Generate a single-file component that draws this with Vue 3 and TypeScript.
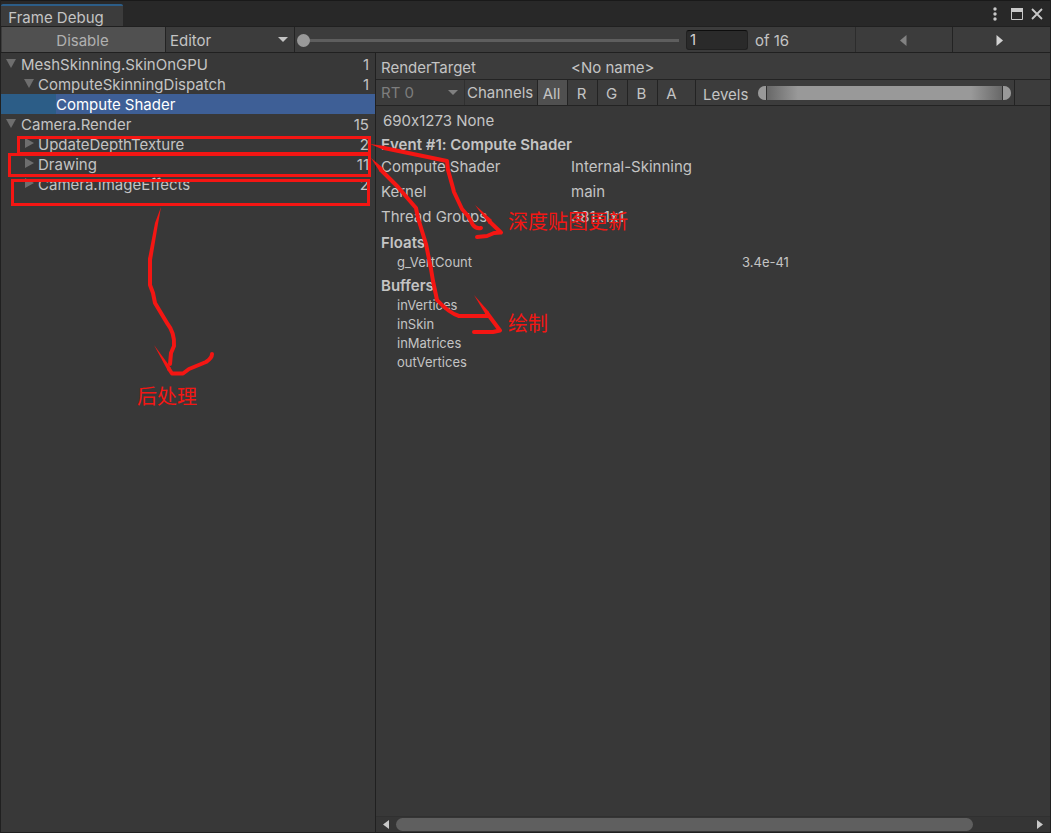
<script setup lang="ts">
import { ref } from 'vue'

interface TreeRow {
  label: string
  depth: number
  count: string
  state: 'open' | 'closed' | 'leaf'
}

const rows: TreeRow[] = [
  { label: 'MeshSkinning.SkinOnGPU', depth: 0, count: '1', state: 'open' },
  { label: 'ComputeSkinningDispatch', depth: 1, count: '1', state: 'open' },
  { label: 'Compute Shader', depth: 2, count: '', state: 'leaf' },
  { label: 'Camera.Render', depth: 0, count: '15', state: 'open' },
  { label: 'UpdateDepthTexture', depth: 1, count: '2', state: 'closed' },
  { label: 'Drawing', depth: 1, count: '11', state: 'closed' },
  { label: 'Camera.ImageEffects', depth: 1, count: '2', state: 'closed' },
]
const selected = ref(2)
const eventIndex = ref(1)
const channels = ['All', 'R', 'G', 'B', 'A']
const channel = ref('All')
const properties = [
  ['Compute Shader', 'Internal-Skinning'],
  ['Kernel', 'main'],
  ['Thread Groups', '381x1x1'],
]
const buffers = ['inVertices', 'inSkin', 'inMatrices', 'outVertices']
const low = ref(0)
const high = ref(100)
</script>

<template>
  <div class="window">
    <header class="titlebar">
      <button class="tab">Frame Debug</button>
      <div class="window-controls">
        <button class="menu" aria-label="Menu">
          <svg width="6" height="14" viewBox="0 0 6 14" fill="#c8c8c8"><circle cx="3" cy="2" r="1.7" /><circle cx="3" cy="7" r="1.7" /><circle cx="3" cy="12" r="1.7" /></svg>
        </button>
        <button aria-label="Maximize">
          <svg width="12" height="12" viewBox="0 0 12 12"><path d="M.5.5h11v11H.5z" fill="none" stroke="#c8c8c8" /><path d="M0 0h12v4H0z" fill="#c8c8c8" /></svg>
        </button>
        <button aria-label="Close">
          <svg width="12" height="12" viewBox="0 0 12 12"><path d="M1 1l10 10M11 1L1 11" stroke="#c8c8c8" stroke-width="1.8" /></svg>
        </button>
      </div>
    </header>

    <div class="toolbar">
      <button class="disable">Disable</button>
      <div class="dropdown target">
        <select aria-label="Connection"><option>Editor</option></select>
        <svg width="10" height="5" viewBox="0 0 10 5"><path d="M0 0h10L5 5z" fill="#c4c4c4" /></svg>
      </div>
      <div class="scrub">
        <input v-model.number="eventIndex" class="event-slider" type="range" min="1" max="16" aria-label="Event" />
        <input v-model.number="eventIndex" class="event-number" type="text" aria-label="Event number" />
        <span>of 16</span>
      </div>
      <button class="step" aria-label="Previous event" disabled>
        <svg width="7" height="11" viewBox="0 0 7 11"><path d="M6.500 0v11L0 5.500z" fill="#828282" /></svg>
      </button>
      <button class="step" aria-label="Next event">
        <svg width="7" height="11" viewBox="0 0 7 11"><path d="M.5 0v11L7 5.500z" fill="#d2d2d2" /></svg>
      </button>
    </div>

    <main class="content">
      <nav class="tree" aria-label="Frame events">
        <button
          v-for="(row, i) in rows"
          :key="row.label"
          class="row"
          :class="['depth-' + row.depth, { selected: selected === i }]"
          @click="selected = i"
        >
          <svg v-if="row.state === 'open'" class="arrow" width="12" height="12" viewBox="0 0 12 12"><path d="M1 2h10L6 11z" fill="#6e6e6e" /></svg>
          <svg v-else-if="row.state === 'closed'" class="arrow" width="12" height="12" viewBox="0 0 12 12"><path d="M2 1v10l9-5z" fill="#6e6e6e" /></svg>
          <span class="label">{{ row.label }}</span>
          <span>{{ row.count }}</span>
        </button>
      </nav>

      <section class="details">
        <div class="pair render-target"><span>RenderTarget</span><span>&lt;No name&gt;</span></div>
        <div class="channel-bar">
          <div class="dropdown rt">
            <select aria-label="Render target index" disabled><option>RT 0</option></select>
            <svg width="10" height="5" viewBox="0 0 10 5"><path d="M0 0h10L5 5z" fill="#808080" /></svg>
          </div>
          <span class="channels-label">Channels</span>
          <button
            v-for="name in channels"
            :key="name"
            class="channel"
            :class="{ active: channel === name }"
            @click="channel = name"
          >{{ name }}</button>
          <div class="levels">
            <span>Levels</span>
            <div class="levels-range">
              <input v-model.number="low" class="low" type="range" aria-label="Black level" />
              <input v-model.number="high" class="high" type="range" aria-label="White level" />
            </div>
          </div>
        </div>
        <div class="info">
          <p class="format">690x1273 None</p>
          <h2 class="event-title">Event #1: Compute Shader</h2>
          <div v-for="[name, value] in properties" :key="name" class="pair property"><span>{{ name }}</span><span>{{ value }}</span></div>
          <h2>Floats</h2>
          <div class="small float"><span>g_VertCount</span><span>3.4e-41</span></div>
          <h2>Buffers</h2>
          <div v-for="name in buffers" :key="name" class="small">{{ name }}</div>
        </div>
        <div class="scrollbar">
          <button aria-label="Scroll left"><svg width="6" height="9" viewBox="0 0 6 9"><path d="M6 0v9L0 4.500z" fill="#c8c8c8" /></svg></button>
          <div class="track"><div class="thumb"></div></div>
          <button aria-label="Scroll right"><svg width="6" height="9" viewBox="0 0 6 9"><path d="M0 0v9l6-4.500z" fill="#c8c8c8" /></svg></button>
        </div>
      </section>
    </main>

    <div class="annotations">
      <svg width="640" height="420" viewBox="0 0 640 420" fill="none" stroke="#f41613" stroke-linecap="round" stroke-linejoin="round">
        <g stroke-width="3" stroke-linejoin="miter">
          <path d="M18.500 137.500h351v16h-351z" />
          <path d="M9.500 154.500h360v21h-360z" />
          <path d="M12.500 180.500h356v24h-356z" />
        </g>
        <g fill="#f41613" stroke="none">
          <path d="M161 207l-3 17-6 36-4-1 7-36z" />
          <path d="M154 345l17 23-3 3z" />
          <path d="M370 144l15 2-1 4z" />
          <path d="M371 158l12 10-3 4z" />
          <path d="M475 205l17 15-3 4z" />
          <path d="M474 295l15 17-3 3z" />
        </g>
        <g stroke-width="4">
          <path d="M150 259V285L153 293 155 303 167 323Q175 333 174 346L171 353 170 364M169 369L172 373.500H183L189 369 206 362Q212 358 212 354" />
          <path d="M384 148L447 161 448 170 453 188 454 192 462 209 468 216 473 225Q476 229 481 228M490 222L501 232.500 494 233 487 236 477 237" />
          <path d="M381 170L398 187Q409 200 416 208L418 218 426 244 431 269 433 281 437 300Q449 313 459 316H488M487 313L500 330.500 493 332H474" />
        </g>
      </svg>
      <span class="note depth">深度贴图更新</span>
      <span class="note draw">绘制</span>
      <span class="note post">后处理</span>
    </div>
  </div>
</template>

<style>
body {
  margin: 0;
  background: #383838;
}
</style>

<style scoped>
* {
  box-sizing: border-box;
}
.window {
  position: relative;
  display: flex;
  flex-direction: column;
  min-height: 100vh;
  border: 1px solid #202020;
  border-width: 0 1px 1px;
  background: #383838;
  color: #c4c4c4;
  font: 15px/20px Inter, "Noto Sans CJK SC", sans-serif;
  font-variant-ligatures: no-contextual;
}
button,
input,
select {
  margin: 0;
  padding: 0;
  border: 0;
  border-radius: 0;
  background: none;
  color: inherit;
  font: inherit;
}
svg {
  display: block;
  flex: none;
}
.titlebar {
  display: flex;
  justify-content: space-between;
  align-items: flex-end;
  height: 27px;
  border-top: 1px solid #191919;
  border-bottom: 1px solid #202020;
  background: #282828;
}
.tab {
  width: 122px;
  height: 22px;
  padding: 2px 12px 0 0;
  border-top: 2px solid #2c5d87;
  border-radius: 2px 2px 0 0;
  background: #3c3c3c;
}
.window-controls {
  display: flex;
  align-items: center;
  gap: 8px;
  height: 24px;
  padding-right: 7px;
}
.menu {
  display: flex;
  justify-content: center;
  width: 16px;
}
.toolbar {
  display: flex;
  height: 26px;
  padding-left: 1px;
  border-bottom: 1px solid #202020;
  background: #3c3c3c;
}
.disable {
  width: 164px;
  padding: 2px 2px 0 0;
  border-right: 1px solid #232323;
  background: #505050;
  color: #b0b0b0;
}
.dropdown {
  display: flex;
  align-items: center;
}
.dropdown select {
  flex: 1;
  min-width: 0;
  appearance: none;
  opacity: 1;
}
.target {
  width: 129px;
  padding: 0 6px 0 4px;
  border-right: 1px solid #232323;
}
.target select {
  padding-top: 2px;
}
.scrub {
  display: flex;
  flex: 1;
  align-items: center;
  gap: 7px;
  padding-left: 2px;
  border-right: 1px solid #2c2c2c;
}
.scrub span {
  width: 100px;
  padding-top: 2px;
}
.event-slider {
  flex: 1;
  min-width: 0;
  height: 14px;
  margin-top: 1px;
  appearance: none;
}
.event-slider::-webkit-slider-runnable-track {
  height: 3px;
  background: linear-gradient(90deg, transparent 12px, #5e5e5e 12px);
}
.event-slider::-webkit-slider-thumb {
  width: 13px;
  height: 13px;
  margin-top: -5px;
  border-radius: 50%;
  appearance: none;
  background: #999;
}
.event-number {
  width: 62px;
  height: 20px;
  padding: 0 3px;
  border: 1px solid #212121;
  border-top-color: #0d0d0d;
  border-radius: 3px;
  background: #2a2a2a;
  color: #d2d2d2;
}
.step {
  display: flex;
  align-items: center;
  justify-content: center;
  width: 96px;
  padding: 2px 2px 0 0;
}
.step + .step {
  width: 98px;
  padding-right: 4px;
  border-left: 1px solid #232323;
}
.content {
  display: flex;
  flex: 1;
}
.tree {
  width: 375px;
  padding-top: 1px;
  border-right: 1px solid #202020;
}
.row {
  display: flex;
  width: 100%;
  height: 20px;
  padding-right: 6px;
  line-height: 21px;
  text-align: left;
}
.row .label {
  flex: 1;
}
.arrow {
  margin: 3px 4px 0 0;
}
.depth-0 {
  padding-left: 4px;
}
.depth-1 {
  padding-left: 22px;
}
.depth-1 .arrow {
  margin-right: 3px;
}
.depth-2 {
  padding-left: 55px;
}
.selected {
  background: linear-gradient(90deg, #2c5d87 55px, #3e5f96 55px);
  color: #fff;
}
.details {
  display: flex;
  flex: 1;
  flex-direction: column;
  min-width: 0;
}
.pair {
  display: grid;
  grid-template-columns: 190px 1fr;
  padding-left: 5px;
}
.render-target {
  height: 27px;
  padding-top: 5px;
  border-bottom: 1px solid #232323;
  background: #3c3c3c;
}
.channel-bar {
  display: flex;
  height: 26px;
  border-bottom: 1px solid #232323;
  background: #3c3c3c;
}
.rt {
  width: 89px;
  padding: 0 6px 0 5px;
  border-right: 1px solid #303030;
  color: #7e7e7e;
}
.channels-label {
  width: 72px;
  padding-left: 2px;
  line-height: 25px;
}
.channel {
  width: 30px;
  padding-right: 2px;
  border-left: 1px solid #232323;
  line-height: 27px;
}
.channel.active {
  background: #505050;
}
.levels {
  display: flex;
  flex: 1;
  align-items: center;
  gap: 10px;
  max-width: 320px;
  margin-left: 8px;
  padding: 4px 3px 0 7px;
  border: solid #232323;
  border-width: 0 1px;
}
.levels-range {
  position: relative;
  flex: 1;
  height: 14px;
  margin-top: -3px;
  border-radius: 7px;
  background: linear-gradient(90deg, #666 8px, #999 40px, #999 calc(100% - 40px), #666 calc(100% - 8px));
}
.levels-range input {
  position: absolute;
  inset: 0;
  width: 100%;
  height: 100%;
  appearance: none;
  pointer-events: none;
}
.levels-range input::-webkit-slider-thumb {
  width: 9px;
  height: 14px;
  appearance: none;
  background: #999;
  pointer-events: auto;
}
.levels-range .low::-webkit-slider-thumb {
  border-right: 1px solid #303030;
  border-radius: 7px 0 0 7px;
}
.levels-range .high::-webkit-slider-thumb {
  border-left: 1px solid #303030;
  border-radius: 0 7px 7px 0;
}
.info {
  flex: 1;
}
.format {
  margin: 0;
  padding: 5px 7px;
}
h2 {
  margin: 4px 0 0;
  padding-left: 5px;
  font-size: 15px;
  font-weight: 600;
  line-height: 20px;
}
.event-title {
  margin: 0;
  line-height: 18px;
}
.property {
  height: 25px;
  line-height: 26px;
}
.small {
  padding-left: 21px;
  font-size: 13px;
  line-height: 19px;
}
.float {
  display: grid;
  grid-template-columns: 345px 1fr;
}
.scrollbar {
  display: flex;
  align-items: center;
  gap: 7px;
  height: 16px;
  padding: 0 7px;
  border-top: 1px solid #303030;
  background: #353535;
}
.track {
  flex: 1;
}
.thumb {
  width: 91%;
  height: 13px;
  border-radius: 7px;
  background: #5f5f5f;
}
.annotations {
  position: absolute;
  top: 0;
  left: -1px;
  pointer-events: none;
}
.note {
  position: absolute;
  color: #f41613;
  font: 20px/24px "Noto Sans CJK SC", sans-serif;
  white-space: nowrap;
}
.depth {
  top: 209px;
  left: 508px;
}
.draw {
  top: 311px;
  left: 508px;
}
.post {
  top: 384px;
  left: 137px;
}
</style>
